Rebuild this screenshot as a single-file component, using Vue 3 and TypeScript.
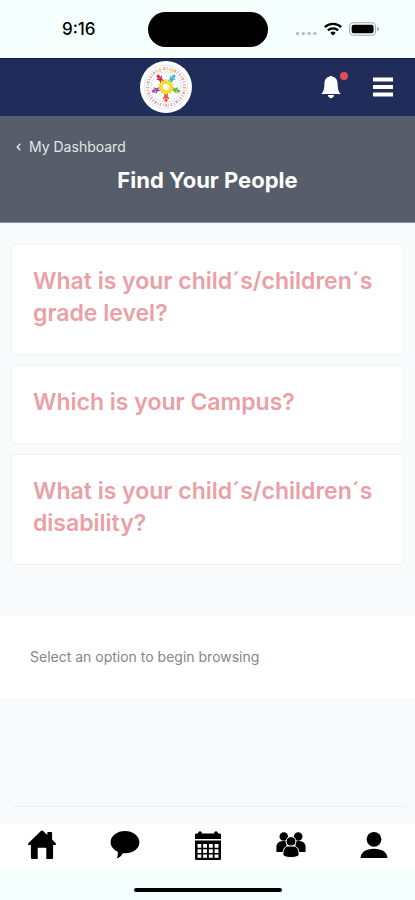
<script setup lang="ts">
interface Tab {
  label: string
  icon: 'home' | 'chat' | 'calendar' | 'group' | 'person'
}

const questions: string[] = [
  'What is your child´s/children´s grade level?',
  'Which is your Campus?',
  'What is your child´s/children´s disability?',
]

const tabs: Tab[] = [
  { label: 'Home', icon: 'home' },
  { label: 'Messages', icon: 'chat' },
  { label: 'Calendar', icon: 'calendar' },
  { label: 'People', icon: 'group' },
  { label: 'Profile', icon: 'person' },
]

// Five little figures placed around the sun of the school seal
const figures = [
  { color: '#e8503c', angle: 180 },
  { color: '#9a4fae', angle: 252 },
  { color: '#c92f4b', angle: 324 },
  { color: '#3fb0e4', angle: 36 },
  { color: '#74b84a', angle: 108 },
]
const rays: number[] = Array.from({ length: 10 }, (_, i) => i * 36)
</script>

<template>
  <div class="screen">
    <div class="status">
      <span class="time">9:16</span>
      <span class="island"></span>
      <div class="indicators">
        <svg width="22" height="14" viewBox="0 0 22 14" aria-hidden="true">
          <g fill="#b9c0c2">
            <circle cx="2.5" cy="11.5" r="1.7" /><circle cx="8.3" cy="11.5" r="1.7" />
            <circle cx="14.1" cy="11.5" r="1.7" /><circle cx="19.9" cy="11.5" r="1.7" />
          </g>
        </svg>
        <svg width="18" height="14" viewBox="0 0 18 14" aria-hidden="true">
          <g fill="none" stroke="#000" stroke-width="2.3">
            <path d="M.8 5.1a11.8 11.8 0 0 1 16.4 0" />
            <path d="M3.9 8.4a7.3 7.3 0 0 1 10.2 0" />
          </g>
          <path d="M9 13.6 6.3 10.9a3.8 3.8 0 0 1 5.4 0z" />
        </svg>
        <svg width="31" height="14" viewBox="0 0 31 14" aria-hidden="true">
          <rect x=".6" y=".8" width="26" height="12.4" rx="3.8" fill="none" stroke="#a6abac" stroke-width="1.1" />
          <rect x="2.6" y="2.7" width="22" height="8.6" rx="2.2" />
          <path d="M28.3 4.8v4.4c2.4-.7 2.4-3.7 0-4.4z" fill="#a6abac" />
        </svg>
      </div>
    </div>

    <nav class="navbar" aria-label="Main">
      <a class="brand" href="#" aria-label="School home">
        <svg width="52" height="52" viewBox="0 0 52 52" aria-hidden="true">
          <circle cx="26" cy="26" r="26" fill="#fff" />
          <circle cx="26" cy="26" r="21.8" fill="none" stroke="#cfe0ef" stroke-width=".8" />
          <circle cx="26" cy="26" r="18.4" fill="none" stroke="#e8a6ad" stroke-width="3.2" stroke-dasharray="1.5 1.5 .9 1.2 2 1.4 1 1.7" />
          <circle cx="26" cy="26" r="15.2" fill="none" stroke="#cfe5f5" stroke-width="1" />
          <circle cx="19.8" cy="8.8" r="2.4" fill="#fff" /><circle cx="32.2" cy="8.8" r="2.4" fill="#fff" />
          <path d="m19.8 6.6.8 1.6 1.8.2-1.3 1.2.3 1.8-1.6-.9-1.6.9.3-1.8-1.3-1.2 1.8-.2zM32.2 6.600l.8 1.6 1.8.2-1.3 1.2.3 1.8-1.6-.9-1.6.9.3-1.8-1.3-1.2 1.8-.2z" fill="#f3dc4c" />
          <g v-for="figure in figures" :key="figure.angle" :fill="figure.color" :transform="`rotate(${figure.angle} 26 26)`">
            <circle cx="26" cy="13" r="1.7" />
            <path d="M23.3 13.7 24.8 14.7h2.4l1.500-1 .6 1-1.600 1.700.3 3.400h-1.200l-.8-2-.8 2h-1.200l.3-3.400-1.600-1.700z" />
          </g>
          <path v-for="ray in rays" :key="ray" d="M23.4 21.2 26 17.6l2.6 3.6z" fill="#f6d526" :transform="`rotate(${ray} 26 26)`" />
          <circle cx="26" cy="26" r="4.7" fill="#fffdf0" stroke="#f8dc33" stroke-width="3" />
        </svg>
      </a>
      <div class="actions">
        <button class="bell" type="button" aria-label="Notifications">
          <svg width="20" height="24" viewBox="0 0 20 24" aria-hidden="true">
            <path d="M8.8 1.6C9 .4 11 .4 11.2 1.6 15.2 2.5 16.6 5.5 16.6 9c0 5 .8 7.8 3.1 10H.3C2.6 16.8 3.4 14 3.4 9c0-3.5 1.4-6.5 5.4-7.4zM7 20h6c-.3 4.2-5.7 4.2-6 0z" fill="#fff" />
          </svg>
          <span class="badge"></span>
        </button>
        <button type="button" aria-label="Menu">
          <svg width="20" height="20" viewBox="0 0 20 20" aria-hidden="true">
            <path d="M0 .5h20v4H0zM0 8h20v4H0zM0 15.5h20v4H0z" fill="#fff" />
          </svg>
        </button>
      </div>
    </nav>

    <header class="hero">
      <a class="back" href="#">
        <svg width="5" height="8" viewBox="0 0 5 8" aria-hidden="true">
          <path d="M4.3.8 1.2 4l3.1 3.2" fill="none" stroke="#e4e6ea" stroke-width="1.4" />
        </svg>
        My Dashboard
      </a>
      <h1>Find Your People</h1>
    </header>

    <main class="content">
      <div class="cards">
        <button v-for="question in questions" :key="question" class="card" type="button">{{ question }}</button>
      </div>
      <p class="hint">Select an option to begin browsing</p>
      <hr class="rule" />
    </main>

    <footer>
      <nav class="tabs" aria-label="Sections">
        <a v-for="tab in tabs" :key="tab.icon" class="tab" href="#" :aria-label="tab.label">
          <svg width="30" height="30" viewBox="0 0 30 30" aria-hidden="true">
            <g v-if="tab.icon === 'home'">
              <path d="M13.9.9q1.1-.8 2.2 0L20.3 5V2.900q0-.9.9-.9h3q.9 0 .9.9v6.600l3.600 3.700q.9 1.300-.3 1.800h-2.300v12.700q0 1.300-1.300 1.300h-5.500V18.400q0-.6-.6-.6h-7.400q-.6 0-.6.6V29H5.200q-1.300 0-1.300-1.300V15H1.600Q.4 14.500 1.300 13.200z" />
            </g>
            <g v-else-if="tab.icon === 'chat'">
              <path d="M15 1c8 0 14.400 4.900 14.400 11.300S23 23.300 15 23.300q-1.200 0-2.200-.1c-1.600 2.800-3.700 4.700-6.100 5.300 1-2 1.300-4.200 1.100-6.700C3.500 19.900.6 16.400.6 12.300.6 5.900 7 1 15 1z" />
            </g>
            <g v-else-if="tab.icon === 'calendar'">
              <path d="M2 4.600q0-1 1-1h2Q5.200 1.200 7 1.200t2 2.400h12Q21.200 1.200 23 1.200t2 2.400h2q1 0 1 1V9H2z" />
              <path fill-rule="evenodd" d="M2 10.500h26V29q0 1-1 1H3q-1 0-1-1zM4.500 14v3.800h3.800V14zm5.600 0v3.800h3.900V14zm5.800 0v3.800h3.900V14zm5.700 0v3.800h3.900V14zM4.500 19.200V23h3.800v-3.800zm5.600 0V23h3.900v-3.800zm5.800 0V23h3.900v-3.800zm5.700 0V23h3.900v-3.800zM4.500 24.400v3.400h3.800v-3.400zm5.600 0v3.400h3.900v-3.400zm5.800 0v3.400h3.900v-3.400zm5.700 0v3.400h3.900v-3.400z" />
            </g>
            <g v-else-if="tab.icon === 'group'">
              <circle cx="7.8" cy="6.5" r="4.3" /><circle cx="22.2" cy="6.5" r="4.3" />
              <path d="M.4 21.5V17.500q0-6.500 6.300-6.500h3L12 22H1q-.6 0-.6-.5zM29.600 21.500V17.500q0-6.500-6.300-6.500h-3L18 22h11q.6 0 .6-.5z" />
              <g stroke="#fff" stroke-width="1">
                <circle cx="15" cy="11.500" r="4.9" />
                <path d="M7 23.500c0-4.700 2.300-7.500 6-7.500h4c3.700 0 6 2.800 6 7.500v2c-3.400 2.700-12.600 2.700-16 0z" />
              </g>
            </g>
            <g v-else>
              <circle cx="15" cy="9.3" r="7.4" />
              <path d="M1.600 28c0-5.500 5-9.300 13.400-9.300s13.400 3.800 13.400 9.300z" />
            </g>
          </svg>
        </a>
      </nav>
      <div class="home-area"><span class="home-indicator"></span></div>
    </footer>
  </div>
</template>

<style>
body {
  margin: 0;
  background: #f8fafc;
}
</style>

<style scoped>
.screen {
  display: flex;
  flex-direction: column;
  min-height: 100vh;
  background: #f8fafc;
  color: #000;
  font-family: Inter, "Open Sans", sans-serif;
}

button {
  padding: 0;
  border: 0;
  background: none;
  font: inherit;
  cursor: pointer;
}

svg {
  display: block;
}

.status {
  display: grid;
  grid-template-columns: 1fr 120px 1fr;
  align-items: center;
  height: 58px;
  background: #f5fffe;
}

.time {
  justify-self: center;
  padding-left: 10px;
  font-size: 17px;
  font-weight: 500;
}

.island {
  height: 35px;
  border-radius: 18px;
  background: #000;
}

.indicators {
  display: flex;
  justify-content: flex-end;
  gap: 7px;
  padding-right: 35px;
}

.navbar {
  display: flex;
  align-items: center;
  height: 58px;
  padding: 0 22px 0 10px;
  background: #202c59;
  box-shadow: inset 0 1px #14164d;
}

.brand {
  display: flex;
  flex: 1;
  justify-content: center;
}

.actions {
  display: flex;
  align-items: center;
  gap: 32px;
}

.bell {
  position: relative;
}

.badge {
  position: absolute;
  top: -3px;
  right: -7px;
  width: 8px;
  height: 8px;
  border-radius: 50%;
  background: #e14d50;
}

.hero {
  display: flex;
  flex-direction: column;
  gap: 7px;
  padding: 21px 16px 26px;
  border-bottom: 1px solid #8b909b;
  background: #575d6b;
}

.back {
  display: flex;
  align-items: center;
  align-self: flex-start;
  gap: 8px;
  color: #e4e6ea;
  font-size: 14px;
  line-height: 20px;
  text-decoration: none;
}

h1 {
  margin: 0;
  color: #fff;
  font-size: 22px;
  font-weight: 700;
  line-height: 32px;
  text-align: center;
}

.content {
  display: flex;
  flex: 1;
  flex-direction: column;
}

.cards {
  display: flex;
  flex-direction: column;
  gap: 10px;
  padding: 21px 11px 51px;
}

.card {
  padding: 20px 16px 25px 21px;
  border: 1px solid #f0f2f5;
  border-radius: 4px;
  background: #fff;
  color: #eaa0a5;
  font-size: 23px;
  font-weight: 600;
  line-height: 32px;
  text-align: left;
}

.hint {
  margin: 0;
  padding: 30px;
  background: #fff;
  color: #858585;
  font-size: 14px;
  line-height: 22px;
}

.rule {
  width: auto;
  margin: auto 10px 17px 14px;
  border: 0;
  border-top: 1px solid #eceff2;
}

.tabs {
  display: grid;
  grid-template-columns: repeat(5, 1fr);
  align-items: center;
  height: 44px;
  padding-bottom: 2px;
  box-sizing: border-box;
  background: #fff;
}

.tab {
  display: flex;
  justify-content: center;
  color: #000;
}

.home-area {
  display: flex;
  justify-content: center;
  align-items: center;
  height: 32px;
  padding-top: 12px;
  box-sizing: border-box;
  background: #f4fffe;
}

.home-indicator {
  width: 148px;
  height: 4px;
  border-radius: 2px;
  background: #000;
}
</style>
